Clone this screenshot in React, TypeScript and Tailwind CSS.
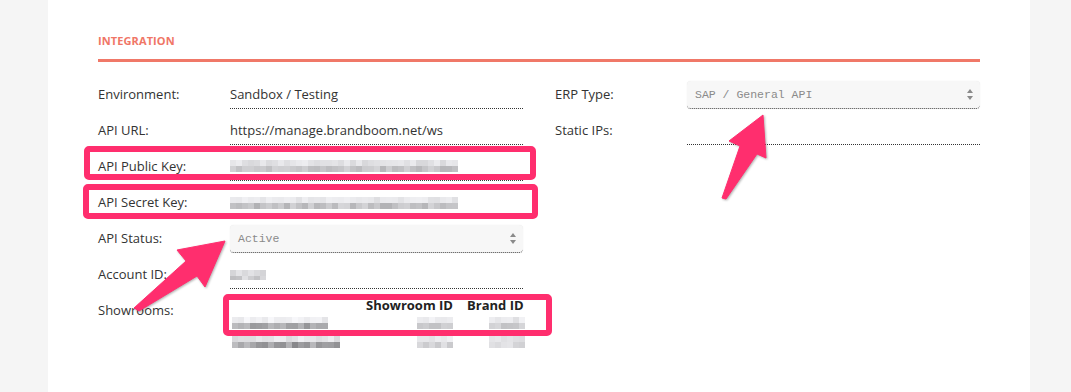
import React from "react";

const PINK = "#ff2e6e";

// blurred (pixelated) value, drawn as a mosaic of grey cells
function makeRand(seed: number) {
  let s = seed;
  return () => {
    s = (s * 9301 + 49297) % 233280;
    return s / 233280;
  };
}

interface MosaicProps {
  cols: number;
  seed: number;
  bands: [number, number][];
  className?: string;
}

function Mosaic({ cols, seed, bands, className }: MosaicProps) {
  const r = makeRand(seed);
  return (
    <div className={`flex flex-col ${className ?? ""}`}>
      {bands.map(([lo, hi], i) => (
        <div key={i} className="flex">
          {Array.from({ length: cols }).map((_, j) => {
            const v = Math.round(lo + (hi - lo) * r());
            return (
              <div
                key={j}
                className="w-[6px] h-[6px] shrink-0"
                style={{ background: `rgb(${v},${v},${v + 3})` }}
              />
            );
          })}
        </div>
      ))}
    </div>
  );
}

function UpDown() {
  return (
    <svg width="6" height="11" viewBox="0 0 6 11" className="shrink-0">
      <path d="M3 0 L6 4 L0 4 Z" fill="#8a8a8a" />
      <path d="M3 11 L6 7 L0 7 Z" fill="#8a8a8a" />
    </svg>
  );
}

function Select({ value }: { value: string }) {
  return (
    <div className="h-[28px] bg-[#f7f7f7] rounded-[4px] border-b border-dotted border-[#444] flex items-center justify-between pl-[8px] pr-[7px] shadow-[0_0_1px_rgba(0,0,0,0.12)]">
      <span className="font-['Liberation_Mono',monospace] text-[11.5px] text-[#8a8a8a]">
        {value}
      </span>
      <UpDown />
    </div>
  );
}

interface RowProps {
  label: string;
  children?: React.ReactNode;
  line?: boolean;
  valueClass?: string;
}

function Row({ label, children, line = true, valueClass = "pt-[12px]" }: RowProps) {
  return (
    <div className="flex h-[36px]">
      <div className="w-[132px] shrink-0 pt-[12px] leading-[18px]">{label}</div>
      <div
        className={`w-[293px] shrink-0 leading-[18px] ${valueClass} ${
          line ? "border-b border-dotted border-[#333]" : ""
        }`}
      >
        {children}
      </div>
    </div>
  );
}

export default function App() {
  return (
    <div className="relative w-[1071px] h-[392px] bg-[#f5f5f5] overflow-hidden font-['Open_Sans',sans-serif] text-[13px] text-[#333]">
      <div className="ml-[48px] w-[982px] h-full bg-white px-[50px] pt-[33px]">
        <h2 className="text-[11px] leading-[15px] font-bold tracking-[0.1px] text-[#f07666]">
          INTEGRATION
        </h2>
        <div className="mt-[11px] h-[3px] bg-[#f07868]" />

        <div className="mt-[11px] flex gap-[32px]">
          {/* left column */}
          <div className="flex flex-col w-[425px] shrink-0">
            <Row label="Environment:">Sandbox / Testing</Row>
            <Row label="API URL:">https://manage.brandboom.net/ws</Row>
            <Row label="API Public Key:" valueClass="pt-[15px]">
              <Mosaic cols={38} seed={11} bands={[[215, 238], [182, 214]]} />
            </Row>
            <Row label="API Secret Key:" valueClass="pt-[16px]">
              <Mosaic cols={38} seed={37} bands={[[222, 240], [178, 214]]} />
            </Row>
            <Row label="API Status:" line={false} valueClass="pt-[8px]">
              <Select value="Active" />
            </Row>
            <Row label="Account ID:" valueClass="pt-[17px]">
              <Mosaic cols={6} seed={5} bands={[[200, 232], [190, 225]]} className="h-[10px] overflow-hidden" />
            </Row>
            <div className="flex">
              <div className="w-[132px] shrink-0 pt-[12px] leading-[18px]">Showrooms:</div>
              <div className="pt-[7px] w-[293px] shrink-0">
                <div className="grid grid-cols-[136px_101px_56px] font-bold leading-[18px] text-[#222]">
                  <span />
                  <span>Showroom ID</span>
                  <span className="whitespace-nowrap">Brand ID</span>
                </div>
                <div className="grid grid-cols-[136px_101px_56px] mt-[3px]">
                  <Mosaic cols={16} seed={3} bands={[[228, 248], [145, 192]]} className="ml-[2px]" />
                  <Mosaic cols={6} seed={8} bands={[[225, 245], [182, 212]]} className="ml-[51px]" />
                  <Mosaic cols={6} seed={14} bands={[[222, 242], [188, 216]]} className="ml-[22px]" />
                </div>
                <div className="grid grid-cols-[136px_101px_56px] mt-[7px]">
                  <Mosaic cols={18} seed={21} bands={[[215, 240], [135, 188]]} className="ml-[2px]" />
                  <Mosaic cols={6} seed={27} bands={[[225, 245], [200, 225]]} className="ml-[51px]" />
                  <Mosaic cols={6} seed={31} bands={[[220, 240], [205, 230]]} className="ml-[22px]" />
                </div>
              </div>
            </div>
          </div>

          {/* right column */}
          <div className="flex flex-col w-[425px] shrink-0">
            <Row label="ERP Type:" line={false} valueClass="pt-[8px]">
              <Select value="SAP / General API" />
            </Row>
            <Row label="Static IPs:" />
          </div>
        </div>
      </div>

      {/* annotation boxes */}
      <div className="absolute left-[84px] top-[146px] w-[452px] h-[34px] border-[6px] border-[#ff2e6e] rounded-[5px]" />
      <div className="absolute left-[83px] top-[184px] w-[455px] h-[35px] border-[6px] border-[#ff2e6e] rounded-[5px]" />
      <div className="absolute left-[223px] top-[294px] w-[329px] h-[42px] border-[6px] border-[#ff2e6e] rounded-[5px]" />

      {/* annotation arrows */}
      <svg
        className="absolute left-0 top-0 pointer-events-none drop-shadow-[1px_1px_1px_rgba(0,0,0,0.3)]"
        width="1071"
        height="392"
        viewBox="0 0 1071 392"
      >
        <polygon
          points="763,115 766,158 757,154 726,199 722,198 740,146 729,141"
          fill={PINK}
          stroke={PINK}
          strokeWidth="1"
          strokeLinejoin="round"
        />
        <polygon
          points="225,241 205,287 197,276 139,311 134,308 186,261 177,250"
          fill={PINK}
          stroke={PINK}
          strokeWidth="1"
          strokeLinejoin="round"
        />
      </svg>
    </div>
  );
}
